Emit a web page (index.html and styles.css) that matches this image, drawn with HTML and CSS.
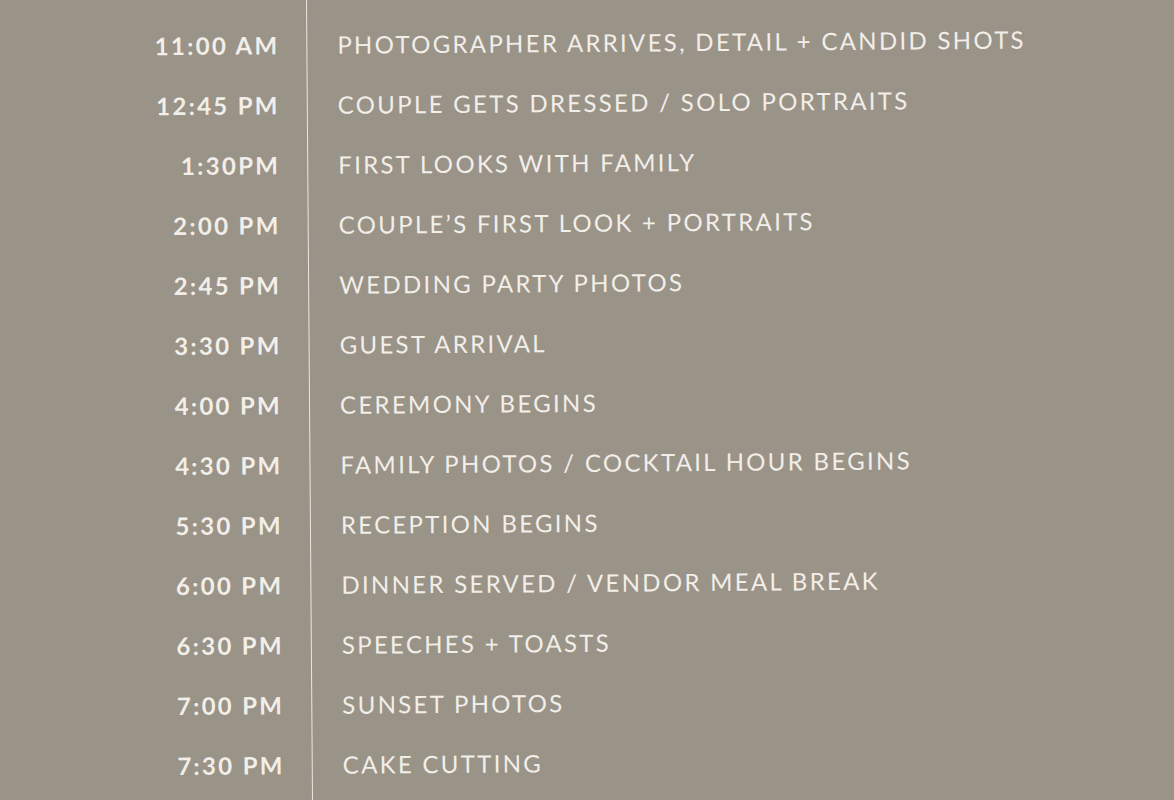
FILE: index.html
```html
<!DOCTYPE html>
<html>
<head>
<meta charset="utf-8">
<link rel="stylesheet" href="styles.css">
</head>
<body>
<div class="schedule">
  <div class="rule"></div>
  <div class="time">11:00 AM</div><div class="event">PHOTOGRAPHER ARRIVES, DETAIL + CANDID SHOTS</div>
  <div class="time">12:45 PM</div><div class="event">COUPLE GETS DRESSED / SOLO PORTRAITS</div>
  <div class="time">1:30PM</div><div class="event">FIRST LOOKS WITH FAMILY</div>
  <div class="time">2:00 PM</div><div class="event">COUPLE’S FIRST LOOK + PORTRAITS</div>
  <div class="time">2:45 PM</div><div class="event">WEDDING PARTY PHOTOS</div>
  <div class="time">3:30 PM</div><div class="event">GUEST ARRIVAL</div>
  <div class="time">4:00 PM</div><div class="event">CEREMONY BEGINS</div>
  <div class="time">4:30 PM</div><div class="event">FAMILY PHOTOS / COCKTAIL HOUR BEGINS</div>
  <div class="time">5:30 PM</div><div class="event">RECEPTION BEGINS</div>
  <div class="time">6:00 PM</div><div class="event">DINNER SERVED / VENDOR MEAL BREAK</div>
  <div class="time">6:30 PM</div><div class="event">SPEECHES + TOASTS</div>
  <div class="time">7:00 PM</div><div class="event">SUNSET PHOTOS</div>
  <div class="time">7:30 PM</div><div class="event">CAKE CUTTING</div>
</div>
</body>
</html>
```
FILE: styles.css
```css
html, body {
  margin: 0;
  padding: 0;
  background: #9a9388;
  overflow: hidden;
  height: 100%;
}
body {
  font-family: Lato, "Open Sans", sans-serif;
  color: #f2eee8;
}
.schedule {
  display: grid;
  grid-template-columns: 282px 28px 1fr;
  grid-auto-rows: 60px;
  padding-top: 14px;
  transform: rotate(-0.43deg);
  transform-origin: 309px 400px;
}
.rule {
  grid-column: 2;
  grid-row: 1 / 14;
  justify-self: end;
  width: 1px;
  background: #ebe6df;
  margin: -60px 0;
}
.time {
  grid-column: 1;
  text-align: right;
  font-weight: 700;
  font-size: 24px;
  letter-spacing: 2.3px;
  align-self: center;
}
.event {
  grid-column: 3;
  padding-left: 30px;
  font-size: 24px;
  letter-spacing: 2.3px;
  align-self: center;
}
```
